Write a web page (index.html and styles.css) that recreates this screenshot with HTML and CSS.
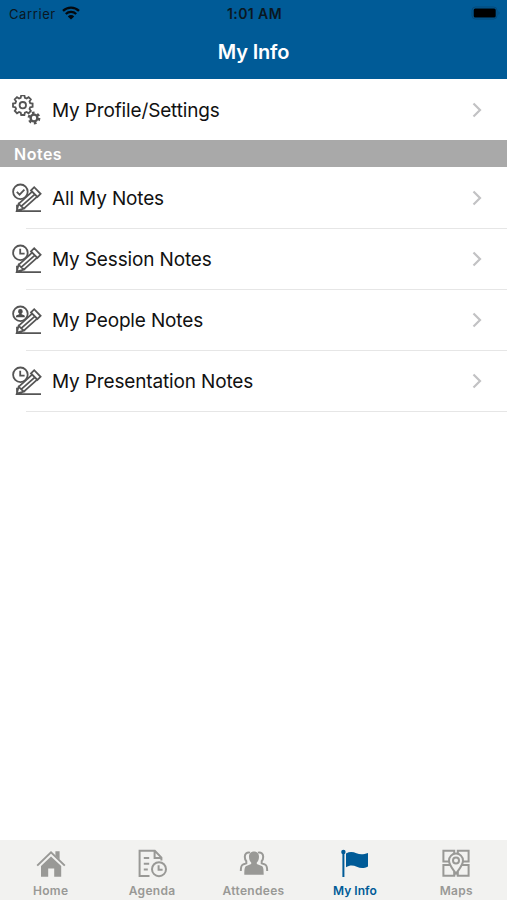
FILE: index.html
```
<!DOCTYPE html>
<html lang="en">

<head>
    <meta charset="UTF-8" />
    <meta name="viewport" content="width=device-width, initial-scale=1.0" />
    <title>My Info</title>
    <link rel="stylesheet" href="styles.css">
</head>

<body>
    <!-- shared icon parts -->
    <svg class="defs" width="0" height="0">
        <symbol id="pencil" viewBox="0 0 30 30">
            <circle cx="8.4" cy="8.8" r="7.3" />
            <path d="M19.6 9.2 6.6 20.800M24.600 14.200 11.800 25.600M22.200 11.800 9.400 23.200M19 7.400l3.200-3.200 6.400 6.600-3.200 3.200zM6.600 20.800l5.200 4.800-7 2zM5 21.800v6.400h24" />
        </symbol>
        <symbol id="clock" viewBox="0 0 30 30">
            <path d="M8.200 4.800v4.800h4.400" />
        </symbol>
        <symbol id="chevron" viewBox="0 0 10 16">
            <path d="M1.500 1.500 8 8l-6.500 6.500" />
        </symbol>
    </svg>

    <div class="app">
        <header class="header">
            <div class="status-bar">
                <div class="carrier">
                    <span>Carrier</span>
                    <svg class="wifi" width="18" height="14" viewBox="0 0 18 14">
                        <path d="M1 4.9a11.5 11.5 0 0 1 16 0M3.8 8a7.5 7.5 0 0 1 10.4 0" />
                        <path class="dot" d="M9 13.6 5.8 10.4a4.6 4.6 0 0 1 6.4 0z" />
                    </svg>
                </div>
                <div class="time">1:01 AM</div>
                <div class="power">
                    <svg width="30" height="14" viewBox="0 0 30 14">
                        <rect class="shell" x="1" y="1" width="25" height="12" rx="3.5" />
                        <rect x="2.7" y="2.5" width="22" height="9" rx="1.5" />
                        <path class="shell-tip" d="M27.5 5v4q2-2 0-4" />
                    </svg>
                </div>
            </div>
            <h1>My Info</h1>
        </header>

        <main class="content">
            <a class="row profile">
                <svg class="row-icon" viewBox="0 0 30 30">
                    <path transform="translate(10.8 10.2)" d="M-1.6-9.8H1.6L2.1-7.4 3.75-6.72 5.8-8.06 8.06-5.8 6.72-3.75 7.4-2.1 9.8-1.6V1.6L7.4 2.1 6.72 3.75 8.06 5.8 5.8 8.06 3.75 6.72 2.1 7.4 1.6 9.8H-1.6L-2.1 7.4-3.75 6.72-5.8 8.06-8.06 5.8-6.72 3.75-7.4 2.1-9.8 1.6V-1.6L-7.4-2.1-6.72-3.75-8.06-5.8-5.8-8.06-3.75-6.72-2.1-7.4Z" />
                    <circle cx="10.8" cy="10.2" r="3.2" />
                    <circle class="gear-ring" cx="22" cy="23" r="3.4" />
                    <circle class="gear-teeth" cx="22" cy="23" r="5.1" />
                </svg>
                <span>My Profile/Settings</span>
                <svg class="chevron"><use href="#chevron" /></svg>
            </a>

            <h2>Notes</h2>

            <a class="row">
                <svg class="row-icon" viewBox="0 0 30 30">
                    <use href="#pencil" />
                    <path d="M4.8 8.8l2.8 2.800 4.800-5" />
                </svg>
                <span>All My Notes</span>
                <svg class="chevron"><use href="#chevron" /></svg>
            </a>
            <a class="row">
                <svg class="row-icon" viewBox="0 0 30 30">
                    <use href="#pencil" />
                    <use href="#clock" />
                </svg>
                <span>My Session Notes</span>
                <svg class="chevron"><use href="#chevron" /></svg>
            </a>
            <a class="row">
                <svg class="row-icon" viewBox="0 0 30 30">
                    <use href="#pencil" />
                    <path class="solid" d="M8.4 4a2.3 2.3 0 0 1 2.3 2.4c0 1-.5 1.7-1.1 2.2v.7l2.6 1c.5.3.6 1 .6 2H4c0-1 .1-1.7.6-2l2.6-1v-.7c-.6-.5-1.1-1.2-1.1-2.2A2.3 2.3 0 0 1 8.4 4z" />
                </svg>
                <span>My People Notes</span>
                <svg class="chevron"><use href="#chevron" /></svg>
            </a>
            <a class="row">
                <svg class="row-icon" viewBox="0 0 30 30">
                    <use href="#pencil" />
                    <use href="#clock" />
                </svg>
                <span>My Presentation Notes</span>
                <svg class="chevron"><use href="#chevron" /></svg>
            </a>
        </main>

        <nav class="tab-bar">
            <a class="tab">
                <svg class="tab-icon" viewBox="0 0 30 30">
                    <path class="fill" d="M15 7.6 25.2 17v10.8h-7V19.6h-6v8.2H5V17zM19.400 2.200h4.200v8.600l-4.200-4z" />
                    <path class="line" d="M1.200 16.600 15 3.400l13.800 13.200" />
                </svg>
                <span>Home</span>
            </a>
            <a class="tab">
                <svg class="tab-icon" viewBox="0 0 30 30">
                    <path class="line" d="M12.5 27H2.600V1.800h15.200l6.600 6.800v3M17.600 2v7h6.600M6.800 9h5.400M6.800 14.800h5.400M6.800 20.600h4" />
                    <circle class="line" cx="22" cy="20.200" r="7" />
                    <path class="line" d="M21.600 16.200v4.600h4" />
                </svg>
                <span>Agenda</span>
            </a>
            <a class="tab">
                <svg class="tab-icon" viewBox="0 0 30 30">
                    <path class="fill" d="M15 2.600c3.200 0 5 2.200 5 5.200 0 2.600-.9 4.500-2.200 5.800v1.500l5 1.900c1.600.7 1.900 3.400 1.900 8.800H5.300c0-5.400.3-8.100 1.900-8.800l5-1.900v-1.500C10.900 12.300 10 10.400 10 7.800c0-3 1.800-5.200 5-5.200z" />
                    <path class="line" d="M11 3.600C8 2.800 5.800 4.600 5.800 7.800c0 2.200.7 3.500 1.500 4.400v2L3.800 15.600c-1.600.7-2 2.800-2 6.400M19 3.600c3-.8 5.200 1 5.200 4.200 0 2.200-.7 3.500-1.500 4.400v2l3.500 1.400c1.600.7 2 2.800 2 6.400" />
                </svg>
                <span>Attendees</span>
            </a>
            <a class="tab active">
                <svg class="tab-icon" viewBox="0 0 30 30">
                    <circle class="fill" cx="3.400" cy="3" r="2.200" />
                    <path class="fill" d="M2.400 3h2v25h-2zM6 4.400c3.400-2 7-1.800 10.400-.2 3.800 1.700 7 1.400 11.600-.2v13.600c-4 2-7.600 1.900-11.200.2-3.600-1.600-7-1.800-10.800.4z" />
                </svg>
                <span>My Info</span>
            </a>
            <a class="tab">
                <svg class="tab-icon" viewBox="0 0 30 30">
                    <path class="line" d="M8 12.400H2.400V1.800h10.800v3M16.800 4.800v-3h10.800v10.600H22M9.600 16H2.400v10.800h10.800v-4.200M20.400 16h7.200v10.800H16.800v-4.200" />
                    <path class="line" d="M15 24.800c-3-4.600-7-8.400-7-13.200a7 7 0 0 1 14 0c0 4.800-4 8.600-7 13.200z" />
                    <circle class="line" cx="15" cy="11.600" r="3" />
                </svg>
                <span>Maps</span>
            </a>
        </nav>
    </div>
</body>

</html>
```
FILE: styles.css
```
* {
    box-sizing: border-box;
}

body {
    margin: 0;
    background-color: #ffffff;
    font-family: Inter, 'Liberation Sans', sans-serif;
    color: #111;
}

.defs {
    display: block;
}

.app {
    display: flex;
    flex-direction: column;
    height: 100vh;
}

.header {
    height: 79px;
    flex-shrink: 0;
    background-color: #005b97;
    text-align: center;
}

.status-bar {
    display: grid;
    grid-template-columns: 1fr auto 1fr;
    align-items: center;
    height: 27px;
    padding: 0 7px 0 9px;
    font-size: 13px;
    color: #0a1722;
}

.carrier {
    display: flex;
    align-items: center;
    gap: 6px;
    letter-spacing: 0.6px;
}

.wifi {
    margin-bottom: 2px;
}

.wifi path {
    fill: none;
    stroke: #04090e;
    stroke-width: 2.3;
}

.wifi .dot {
    fill: #04090e;
    stroke: none;
}

.time {
    font-size: 14px;
    font-weight: 600;
    letter-spacing: 0.4px;
}

.power {
    display: flex;
    justify-content: flex-end;
    margin-right: -1px;
    padding-bottom: 1px;
}

.power .shell {
    fill: none;
    stroke: #064a79;
}

.power .shell-tip {
    fill: #064a79;
}

h1 {
    margin: 0;
    font-size: 20px;
    line-height: 50px;
    font-weight: 600;
    letter-spacing: -0.2px;
    color: #fff;
}

.content {
    flex: 1;
}

.row {
    display: flex;
    align-items: center;
    height: 61px;
    padding: 0 25px 2px 12px;
    font-size: 19px;
    letter-spacing: -0.15px;
    background: linear-gradient(#e6e6e6, #e6e6e6) 26px 100% / 100% 1px no-repeat;
}

.row.profile {
    padding-bottom: 0;
    background: none;
}

.row span {
    flex: 1;
    padding-top: 2px;
}

.row-icon {
    width: 30px;
    height: 30px;
    margin-right: 10px;
    fill: none;
    stroke: #555;
    stroke-width: 1.8;
}

.row-icon .gear-ring {
    stroke-width: 2.4;
}

.row-icon .gear-teeth {
    stroke-width: 2.6;
    stroke-dasharray: 2.6 2.74;
}

.row-icon .solid {
    fill: #4c4c4c;
    stroke: none;
}

.chevron {
    width: 10px;
    height: 16px;
    fill: none;
    stroke: #c2c2c4;
    stroke-width: 2.2;
}

h2 {
    margin: 0 0 1px;
    height: 27px;
    padding-left: 14px;
    background-color: #a9a9a9;
    color: #fff;
    font-size: 16px;
    line-height: 28px;
    font-weight: 600;
    letter-spacing: 0.5px;
}

.tab-bar {
    display: flex;
    height: 60px;
    flex-shrink: 0;
    background-color: #f2f2f0;
}

.tab {
    flex: 1;
    display: flex;
    flex-direction: column;
    align-items: center;
    padding-top: 9px;
    color: #999996;
    font-size: 12px;
    font-weight: 600;
    line-height: 16px;
    letter-spacing: 0.3px;
}

.tab-icon {
    width: 30px;
    height: 30px;
    margin-bottom: 4px;
}

.tab-icon .fill {
    fill: currentColor;
}

.tab-icon .line {
    fill: none;
    stroke: currentColor;
    stroke-width: 2;
}

.tab.active {
    color: #005b97;
    letter-spacing: 0;
}
```
